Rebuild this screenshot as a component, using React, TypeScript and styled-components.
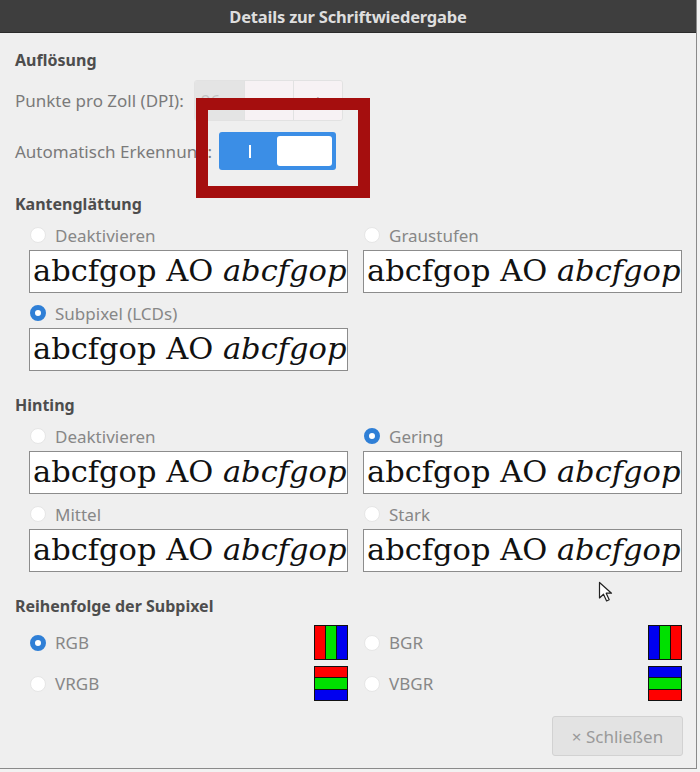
import React from 'react';
import styled, { createGlobalStyle } from 'styled-components';

type Choice = { label: string; checked?: boolean };

const GlobalStyle = createGlobalStyle`
  html, body {
    margin: 0;
    padding: 0;
    background: #f2f2f2;
  }
  body {
    font-family: "Noto Sans", "Open Sans", sans-serif;
  }
`;

const SAMPLE = 'abcfgop AO';

const Radio: React.FC<Choice> = ({ label, checked }) => (
  <RadioRow>
    <RadioDot $checked={!!checked} />
    <RadioLabel>{label}</RadioLabel>
  </RadioRow>
);

const Preview: React.FC = () => (
  <PreviewBox>
    {SAMPLE} <em>abcfgop</em>
  </PreviewBox>
);

const PreviewOption: React.FC<Choice> = (props) => (
  <OptionCell>
    <Radio {...props} />
    <Preview />
  </OptionCell>
);

const SubpixelIcon: React.FC<{ order: string[]; vertical?: boolean }> = ({ order, vertical }) => (
  <PixelIcon $vertical={!!vertical}>
    {order.map((c, i) => (
      <PixelStripe key={i} $color={c} />
    ))}
  </PixelIcon>
);

const R = '#ff0000';
const G = '#00e000';
const B = '#0000f0';

const App: React.FC = () => {
  return (
    <>
      <GlobalStyle />
      <Window>
        <TitleBar>Details zur Schriftwiedergabe</TitleBar>
        <Body>
          <Heading>Auflösung</Heading>
          <FieldRow $top={9} $gap={10}>
            <FieldLabel>Punkte pro Zoll (DPI):</FieldLabel>
            <SpinButton>
              <SpinEntry>96</SpinEntry>
              <SpinStep>−</SpinStep>
              <SpinStep>+</SpinStep>
            </SpinButton>
          </FieldRow>
          <FieldRow $top={11} $gap={7}>
            <FieldLabel>Automatisch Erkennung:</FieldLabel>
            <Switch>
              <SwitchMark><SwitchBar /></SwitchMark>
              <SwitchKnob />
            </Switch>
          </FieldRow>

          <Heading $top={23}>Kantenglättung</Heading>
          <OptionGrid>
            <PreviewOption label="Deaktivieren" />
            <PreviewOption label="Graustufen" />
            <PreviewOption label="Subpixel (LCDs)" checked />
          </OptionGrid>

          <Heading $top={18}>Hinting</Heading>
          <OptionGrid>
            <PreviewOption label="Deaktivieren" />
            <PreviewOption label="Gering" checked />
            <PreviewOption label="Mittel" />
            <PreviewOption label="Stark" />
          </OptionGrid>

          <Heading $top={18}>Reihenfolge der Subpixel</Heading>
          <OrderGrid>
            <OrderCell>
              <Radio label="RGB" checked />
              <SubpixelIcon order={[R, G, B]} />
            </OrderCell>
            <OrderCell>
              <Radio label="BGR" />
              <SubpixelIcon order={[B, G, R]} />
            </OrderCell>
            <OrderCell>
              <Radio label="VRGB" />
              <SubpixelIcon order={[R, G, B]} vertical />
            </OrderCell>
            <OrderCell>
              <Radio label="VBGR" />
              <SubpixelIcon order={[B, G, R]} vertical />
            </OrderCell>
          </OrderGrid>

          <Footer>
            <CloseButton>× Schließen</CloseButton>
          </Footer>
        </Body>

        <Highlight />
        <Pointer viewBox="0 0 16 22" width="16" height="22">
          <path d="M1.5 1.5 L1.5 17 L5.5 13.2 L8.6 20 L11.2 18.8 L8.2 12.2 L13.5 12.2 Z" fill="#fff" stroke="#222" strokeWidth="1.2" strokeLinejoin="round" />
        </Pointer>
      </Window>
    </>
  );
};

const Window = styled.div`
  position: relative;
  width: 696px;
  height: 768px;
  background: #efefef;
  border-right: 1px solid #8a8a8a;
  border-bottom: 1px solid #8a8a8a;
  overflow: hidden;
`;

const TitleBar = styled.div`
  height: 32px;
  display: flex;
  align-items: center;
  justify-content: center;
  background: #3e3e3e;
  border-bottom: 1px solid #2a2a2a;
  color: #dedede;
  font-size: 16.5px;
  font-weight: 700;
  letter-spacing: -0.2px;
`;

const Body = styled.div`
  padding: 16px 0 0 15px;
  display: flex;
  flex-direction: column;
`;

const Heading = styled.div<{ $top?: number }>`
  margin-top: ${({ $top }) => $top || 0}px;
  height: 22px;
  line-height: 22px;
  font-size: 16px;
  font-weight: 700;
  color: #4d4d4d;
`;

const FieldRow = styled.div<{ $top: number; $gap: number }>`
  display: flex;
  align-items: center;
  gap: ${({ $gap }) => $gap}px;
  margin-top: ${({ $top }) => $top}px;
`;

const FieldLabel = styled.span`
  font-size: 17px;
  color: #7a7a7a;
`;

const SpinButton = styled.div`
  display: flex;
  height: 41px;
  box-sizing: border-box;
  border: 1px solid #e2e2e2;
  border-radius: 3px;
  overflow: hidden;
`;

const SpinEntry = styled.div`
  width: 49px;
  background: #e4e4e4;
  color: #c4c4c4;
  font-size: 17px;
  line-height: 39px;
  padding-left: 6px;
  box-sizing: border-box;
`;

const SpinStep = styled.div`
  width: 48px;
  display: flex;
  align-items: center;
  justify-content: center;
  background: #f7f2f4;
  border-left: 1px solid #e2e2e2;
  color: #aaa;
  font-size: 17px;
`;

const Switch = styled.div`
  width: 117px;
  height: 38px;
  box-sizing: border-box;
  padding: 4px;
  display: flex;
  align-items: center;
  background: #3b8ee6;
  border-radius: 3px;
`;

const SwitchMark = styled.span`
  flex: 1;
  display: flex;
  justify-content: center;
`;

const SwitchBar = styled.span`
  width: 2px;
  height: 13px;
  background: #fff;
`;

const SwitchKnob = styled.div`
  width: 55px;
  height: 30px;
  background: #fff;
  border-radius: 3px;
`;

const OptionGrid = styled.div`
  display: grid;
  grid-template-columns: 319px 319px;
  column-gap: 15px;
  padding-left: 14px;
  margin-top: 5px;
`;

const OptionCell = styled.div`
  display: flex;
  flex-direction: column;
`;

const RadioRow = styled.div`
  display: flex;
  align-items: center;
  gap: 9px;
  height: 30px;
  padding-left: 1px;
`;

const RadioDot = styled.span<{ $checked: boolean }>`
  width: 16px;
  height: 16px;
  border-radius: 50%;
  box-sizing: border-box;
  background: #fff;
  border: ${({ $checked }) => ($checked ? '5px solid #2f7fd6' : '1px solid #e6e6e6')};
`;

const RadioLabel = styled.span`
  font-size: 17px;
  color: #878787;
`;

const PreviewBox = styled.div`
  height: 43px;
  box-sizing: border-box;
  border: 1px solid #8c8c8c;
  background: #fff;
  padding-left: 3px;
  font-family: "DejaVu Serif", "Liberation Serif", serif;
  font-size: 30.5px;
  line-height: 40px;
  color: #111;
  white-space: nowrap;
  overflow: hidden;
  margin-bottom: 5px;

  em {
    font-style: italic;
  }
`;

const OrderGrid = styled.div`
  display: grid;
  grid-template-columns: 319px 319px;
  column-gap: 15px;
  row-gap: 6px;
  padding-left: 14px;
  margin-top: 8px;
`;

const OrderCell = styled.div`
  display: flex;
  align-items: center;
  justify-content: space-between;
`;

const PixelIcon = styled.div<{ $vertical: boolean }>`
  width: 34px;
  height: 35px;
  box-sizing: border-box;
  border: 1px solid #111;
  display: flex;
  flex-direction: ${({ $vertical }) => ($vertical ? 'column' : 'row')};
  background: #111;
  gap: 1px;
`;

const PixelStripe = styled.div<{ $color: string }>`
  flex: 1;
  background: ${({ $color }) => $color};
`;

const Footer = styled.div`
  display: flex;
  justify-content: flex-end;
  padding-right: 13px;
  margin-top: 15px;
`;

const CloseButton = styled.div`
  width: 131px;
  height: 40px;
  box-sizing: border-box;
  display: flex;
  align-items: center;
  justify-content: center;
  background: #e3e3e3;
  border: 1px solid #d2d2d2;
  border-radius: 3px;
  color: #9a9a9a;
  font-size: 17px;
`;

const Highlight = styled.div`
  position: absolute;
  left: 196px;
  top: 98px;
  width: 174px;
  height: 100px;
  box-sizing: border-box;
  border: 12px solid #a50e0e;
  pointer-events: none;
`;

const Pointer = styled.svg`
  position: absolute;
  left: 598px;
  top: 581px;
`;

export default App;
